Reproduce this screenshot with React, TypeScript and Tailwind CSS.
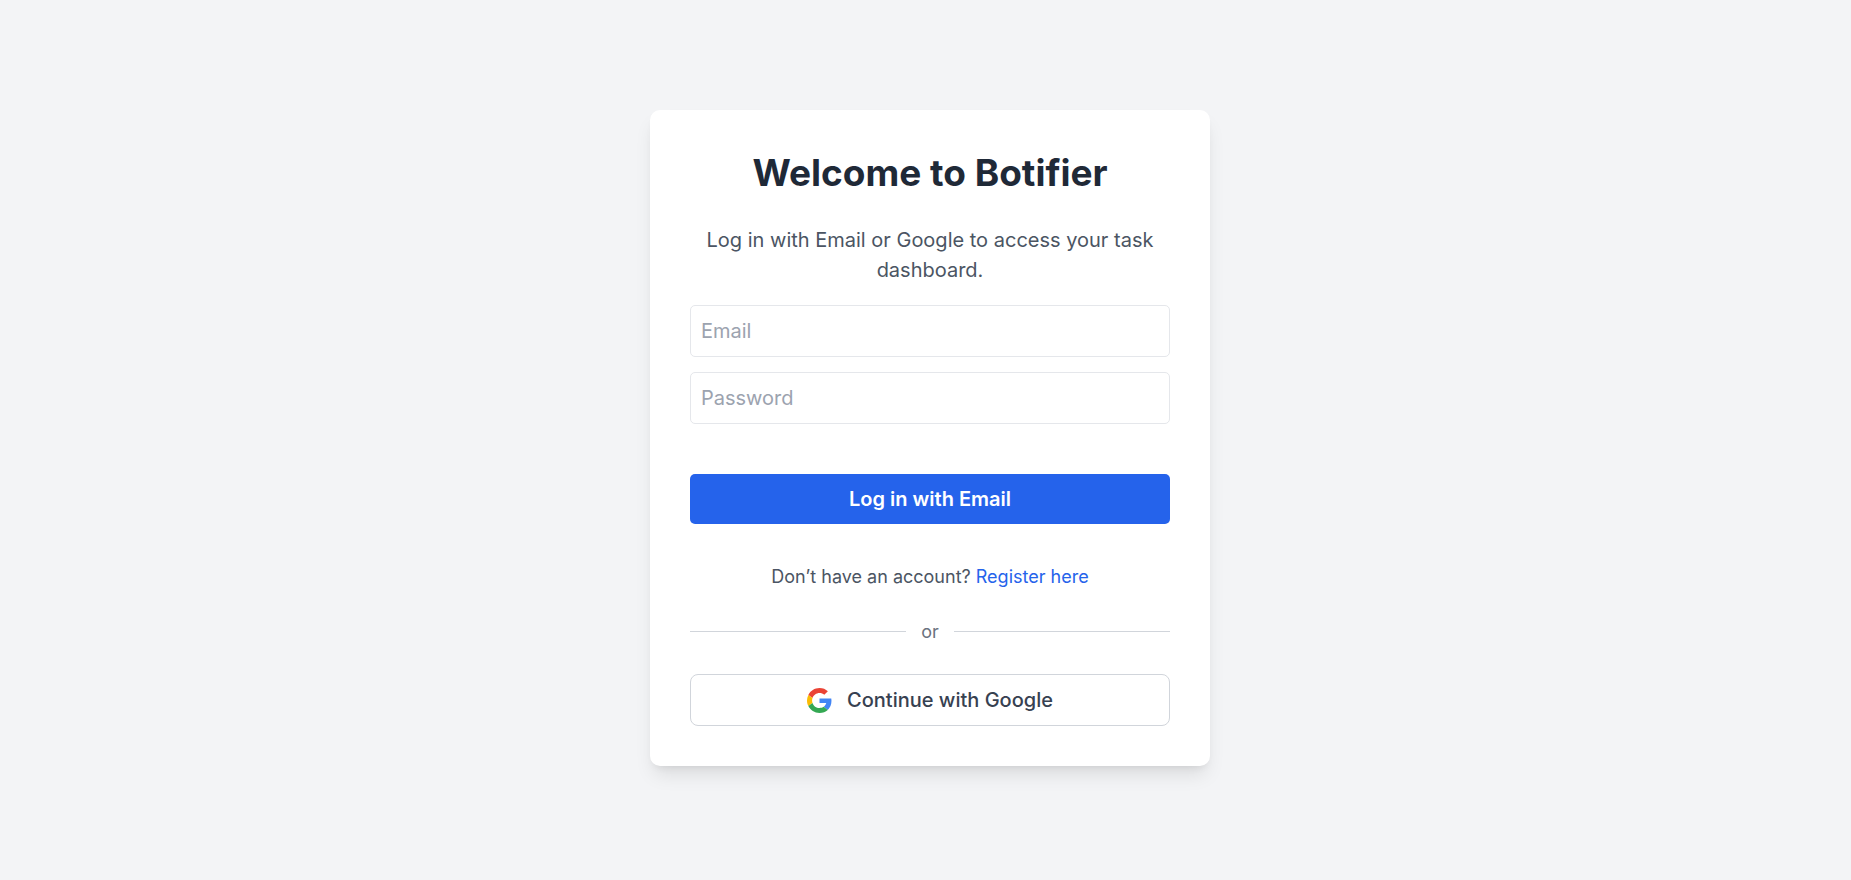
import { useState } from "react";

function GoogleLogo() {
  return (
    <svg viewBox="0 0 48 48" className="size-[25px] shrink-0" aria-hidden="true">
      <path
        fill="#EA4335"
        d="M24 9.5c3.54 0 6.71 1.22 9.21 3.6l6.85-6.85C35.9 2.38 30.47 0 24 0 14.62 0 6.51 5.38 2.56 13.22l7.98 6.19C12.43 13.72 17.74 9.5 24 9.5z"
      />
      <path
        fill="#4285F4"
        d="M46.98 24.55c0-1.57-.15-3.09-.38-4.55H24v9.02h12.94c-.58 2.96-2.26 5.48-4.78 7.18l7.73 6c4.51-4.18 7.09-10.36 7.09-17.65z"
      />
      <path
        fill="#FBBC05"
        d="M10.53 28.59c-.48-1.45-.76-2.99-.76-4.59s.27-3.14.76-4.59l-7.98-6.19C.92 16.46 0 20.12 0 24c0 3.88.92 7.54 2.56 10.78l7.97-6.19z"
      />
      <path
        fill="#34A853"
        d="M24 48c6.48 0 11.93-2.13 15.89-5.81l-7.73-6c-2.15 1.45-4.92 2.3-8.16 2.3-6.26 0-11.57-4.22-13.47-9.91l-7.98 6.19C6.51 42.62 14.62 48 24 48z"
      />
    </svg>
  );
}

export default function App() {
  const [email, setEmail] = useState("");
  const [password, setPassword] = useState("");

  return (
    <main className="flex min-h-screen items-center justify-center bg-[#f3f4f6] pb-1 pl-[9px] font-[Inter,sans-serif] text-xl leading-[30px]">
      <div className="w-full max-w-[560px] rounded-[10px] bg-white p-10 text-center shadow-[0_12px_19px_-4px_rgba(0,0,0,0.1),0_5px_8px_-5px_rgba(0,0,0,0.1)]">
        <h1 className="mb-[30px] text-[37px] leading-[45px] font-bold text-[#1f2937]">
          Welcome to Botifier
        </h1>
        <p className="mb-5 text-[#4b5563]">
          Log in with Email or Google to access your task dashboard.
        </p>

        <form onSubmit={(event) => event.preventDefault()}>
          <div className="mb-[50px] flex flex-col gap-[15px]">
            <input
              type="email"
              aria-label="Email"
              placeholder="Email"
              value={email}
              onChange={(event) => setEmail(event.target.value)}
              className="w-full rounded-[5px] border border-[#e5e7eb] p-[10px] text-[#1f2937] placeholder:text-[#9ca3af]"
            />
            <input
              type="password"
              aria-label="Password"
              placeholder="Password"
              value={password}
              onChange={(event) => setPassword(event.target.value)}
              className="w-full rounded-[5px] border border-[#e5e7eb] p-[10px] text-[#1f2937] placeholder:text-[#9ca3af]"
            />
          </div>
          <button
            type="submit"
            className="w-full rounded-[5px] bg-[#2563eb] py-[10px] font-semibold text-white hover:bg-[#1d4ed8]"
          >
            Log in with Email
          </button>
        </form>

        <p className="mt-10 text-lg leading-[25px] text-[#4b5563]">
          Don’t have an account?{" "}
          <a href="#register" className="text-[#2563eb] hover:underline">
            Register here
          </a>
        </p>

        <div className="my-[30px] flex items-center gap-[15px] text-lg leading-[25px] text-[#6b7280]">
          <div className="h-px flex-1 bg-[#d1d5db]" />
          <span>or</span>
          <div className="h-px flex-1 bg-[#d1d5db]" />
        </div>

        <button
          type="button"
          className="flex w-full items-center justify-center gap-[15px] rounded-[8px] border border-[#d1d5db] bg-white py-[10px] font-medium text-[#374151] hover:bg-gray-50"
        >
          <GoogleLogo />
          Continue with Google
        </button>
      </div>
    </main>
  );
}
